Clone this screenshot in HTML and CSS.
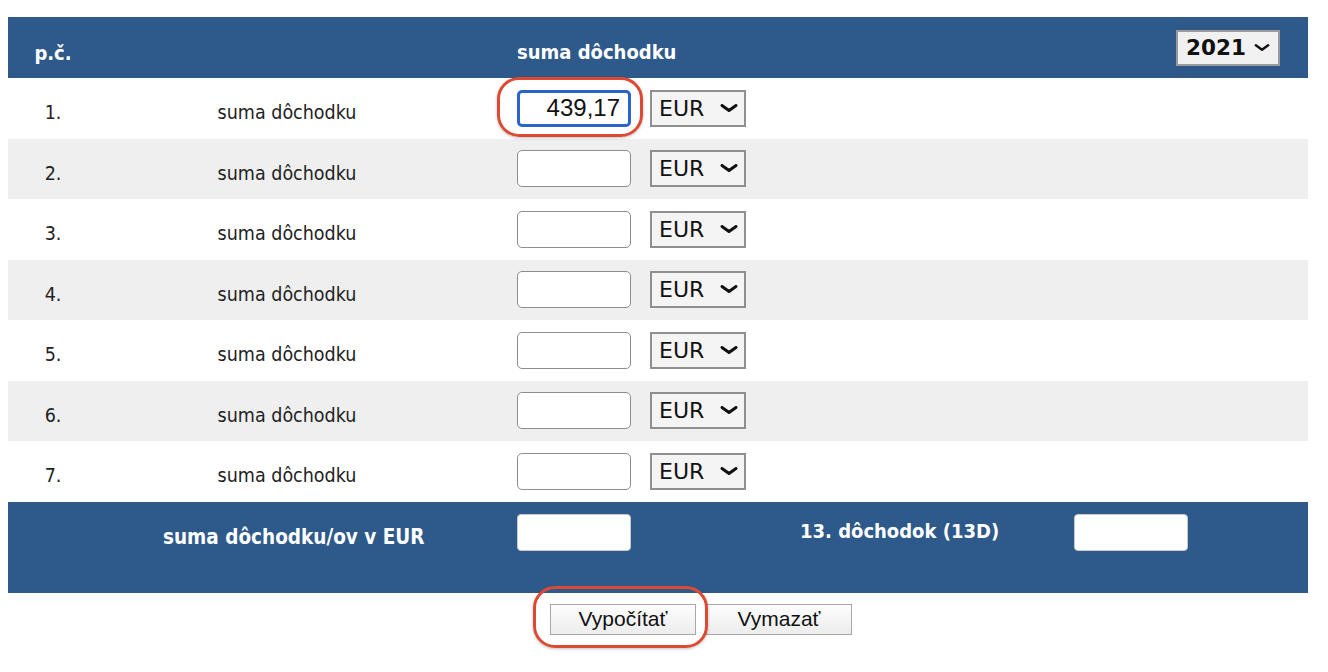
FILE: index.html
```html
<!DOCTYPE html>
<html lang="sk">
<head>
<meta charset="utf-8">
<title>Výpočet 13. dôchodku</title>
<link rel="stylesheet" href="styles.css">
</head>
<body>
<div class="page">
  <div class="tbl">
    <div class="row head">
      <div class="c1">p.č.</div>
      <div class="c2"></div>
      <div class="c3 headc3">
        <span class="htitle">suma dôchodku</span>
        <span class="selwrap year">
          <select class="sel yearsel"><option>2021</option></select>
          <svg class="chev" viewBox="0 0 18 8" width="16" height="7"><path d="M2 1.5 L9 6.5 L16 1.5" fill="none" stroke="#111" stroke-width="2.8" stroke-linecap="round" stroke-linejoin="round"/></svg>
        </span>
      </div>
    </div>

    <div class="row">
      <div class="c1 txt">1.</div>
      <div class="c2 txt">suma dôchodku</div>
      <div class="c3"><input class="inp focus" type="text" value="439,17"><span class="selwrap"><select class="sel cur"><option>EUR</option></select><svg class="chev" viewBox="0 0 18 8" width="18" height="8"><path d="M2 1.5 L9 6.5 L16 1.5" fill="none" stroke="#111" stroke-width="3" stroke-linecap="round" stroke-linejoin="round"/></svg></span></div>
    </div>
    <div class="row alt">
      <div class="c1 txt">2.</div>
      <div class="c2 txt">suma dôchodku</div>
      <div class="c3"><input class="inp" type="text"><span class="selwrap"><select class="sel cur"><option>EUR</option></select><svg class="chev" viewBox="0 0 18 8" width="18" height="8"><path d="M2 1.5 L9 6.5 L16 1.5" fill="none" stroke="#111" stroke-width="3" stroke-linecap="round" stroke-linejoin="round"/></svg></span></div>
    </div>
    <div class="row">
      <div class="c1 txt">3.</div>
      <div class="c2 txt">suma dôchodku</div>
      <div class="c3"><input class="inp" type="text"><span class="selwrap"><select class="sel cur"><option>EUR</option></select><svg class="chev" viewBox="0 0 18 8" width="18" height="8"><path d="M2 1.5 L9 6.5 L16 1.5" fill="none" stroke="#111" stroke-width="3" stroke-linecap="round" stroke-linejoin="round"/></svg></span></div>
    </div>
    <div class="row alt">
      <div class="c1 txt">4.</div>
      <div class="c2 txt">suma dôchodku</div>
      <div class="c3"><input class="inp" type="text"><span class="selwrap"><select class="sel cur"><option>EUR</option></select><svg class="chev" viewBox="0 0 18 8" width="18" height="8"><path d="M2 1.5 L9 6.5 L16 1.5" fill="none" stroke="#111" stroke-width="3" stroke-linecap="round" stroke-linejoin="round"/></svg></span></div>
    </div>
    <div class="row">
      <div class="c1 txt">5.</div>
      <div class="c2 txt">suma dôchodku</div>
      <div class="c3"><input class="inp" type="text"><span class="selwrap"><select class="sel cur"><option>EUR</option></select><svg class="chev" viewBox="0 0 18 8" width="18" height="8"><path d="M2 1.5 L9 6.5 L16 1.5" fill="none" stroke="#111" stroke-width="3" stroke-linecap="round" stroke-linejoin="round"/></svg></span></div>
    </div>
    <div class="row alt">
      <div class="c1 txt">6.</div>
      <div class="c2 txt">suma dôchodku</div>
      <div class="c3"><input class="inp" type="text"><span class="selwrap"><select class="sel cur"><option>EUR</option></select><svg class="chev" viewBox="0 0 18 8" width="18" height="8"><path d="M2 1.5 L9 6.5 L16 1.5" fill="none" stroke="#111" stroke-width="3" stroke-linecap="round" stroke-linejoin="round"/></svg></span></div>
    </div>
    <div class="row">
      <div class="c1 txt">7.</div>
      <div class="c2 txt">suma dôchodku</div>
      <div class="c3"><input class="inp" type="text"><span class="selwrap"><select class="sel cur"><option>EUR</option></select><svg class="chev" viewBox="0 0 18 8" width="18" height="8"><path d="M2 1.5 L9 6.5 L16 1.5" fill="none" stroke="#111" stroke-width="3" stroke-linecap="round" stroke-linejoin="round"/></svg></span></div>
    </div>

    <div class="row foot">
      <div class="c12 flabel">suma dôchodku/ov v EUR</div>
      <div class="c3 fc3">
        <input class="inp white" type="text">
        <span class="flabel2">13. dôchodok (13D)</span>
        <input class="inp white" type="text">
      </div>
    </div>
  </div>

  <div class="actions">
    <button class="btn" type="button">Vypočítať</button>
    <button class="btn" type="button">Vymazať</button>
  </div>

  <div class="mark mark1"></div>
  <div class="mark mark2"></div>
</div>
</body>
</html>
```

FILE: styles.css
```css
* { box-sizing: border-box; }

html, body {
  margin: 0;
  padding: 0;
  background: #ffffff;
}

body {
  font-family: "DejaVu Sans Condensed", "DejaVu Sans", Verdana, sans-serif;
  font-stretch: semi-condensed;
  color: #222222;
  width: 1328px;
  height: 672px;
  overflow: hidden;
}

.page {
  position: relative;
  padding: 17px 0 0 8px;
  height: 672px;
}

.tbl {
  width: 1300px;
}

.row {
  display: grid;
  grid-template-columns: 90px 378px 1fr;
  height: 60.5px;
  background: #ffffff;
}

.row.alt { background: #efefef; }

.row.head {
  height: 61px;
  background: #2e5a8b;
  color: #ffffff;
  font-weight: bold;
  font-size: 20px;
}

.c1, .c2 {
  display: flex;
  align-items: center;
  justify-content: center;
  padding-top: 10px;
  line-height: 24px;
}

.txt {
  font-size: 19.5px;
  color: #222;
}

.c3 {
  display: flex;
  align-items: center;
  padding-left: 41px;
}

.headc3 {
  justify-content: space-between;
  padding-right: 28px;
}

.htitle {
  padding-top: 9px;
  line-height: 24px;
}

.inp {
  width: 114px;
  height: 37px;
  border: 1.5px solid #8d8d8d;
  border-radius: 5px;
  background: #ffffff;
  font-family: "Liberation Sans", Arial, sans-serif;
  font-stretch: normal;
  font-size: 24px;
  color: #111;
  text-align: right;
  padding: 0 10px 0 4px;
  outline: none;
}

.inp.focus {
  border: 3px solid #2a63c9;
  border-radius: 5px;
  padding-right: 8px;
}

.selwrap {
  position: relative;
  display: inline-block;
  margin-left: 19px;
  height: 37px;
}

.sel {
  -webkit-appearance: none;
  appearance: none;
  height: 37px;
  width: 96px;
  border: 2px solid #8f8f8f;
  border-radius: 0;
  background: #f4f4f4;
  font-family: "DejaVu Sans", Verdana, sans-serif;
  font-stretch: normal;
  font-size: 22px;
  color: #111;
  padding: 0 0 0 7px;
  outline: none;
}

.chev {
  position: absolute;
  right: 8px;
  top: 14px;
  pointer-events: none;
}

.selwrap.year {
  margin-left: 0;
  height: 36px;
}

.yearsel {
  width: 104px;
  height: 36px;
  font-weight: bold;
  font-size: 21.5px;
  padding-left: 8px;
  background: #f1f1f1;
  border: 2px solid #9a9a9a;
}

.selwrap.year .chev {
  right: 10px;
  top: 14px;
}

.row.foot {
  height: 91px;
  background: #2e5a8b;
  color: #ffffff;
  font-weight: bold;
}

.c12 {
  grid-column: 1 / 3;
}

.flabel {
  font-size: 20.5px;
  line-height: 24px;
  padding: 23px 0 0 155px;
}

.fc3 {
  align-items: flex-start;
  padding-top: 12px;
}

.flabel2 {
  display: inline-block;
  width: 274px;
  margin-left: 169px;
  padding-top: 5px;
  font-size: 20px;
  line-height: 24px;
}

.inp.white {
  border: 1px solid #c9c9c9;
  border-radius: 4px;
}

.actions {
  display: flex;
  gap: 10px;
  padding: 11px 0 0 542px;
}

.btn {
  width: 146px;
  height: 31px;
  border: 1.5px solid #a8a8a8;
  border-radius: 0;
  background: linear-gradient(#fdfdfd, #ececec);
  font-family: "Liberation Sans", Arial, sans-serif;
  font-stretch: normal;
  font-size: 21px;
  color: #111;
  padding: 0;
}

.mark {
  position: absolute;
  border: 3px solid #dc4a33;
  border-radius: 22px;
  box-shadow: 0 1px 3px rgba(0,0,0,0.25);
  pointer-events: none;
}

.mark1 {
  left: 497px;
  top: 77px;
  width: 146px;
  height: 60px;
}

.mark2 {
  left: 533px;
  top: 586px;
  width: 175px;
  height: 62px;
}
```
